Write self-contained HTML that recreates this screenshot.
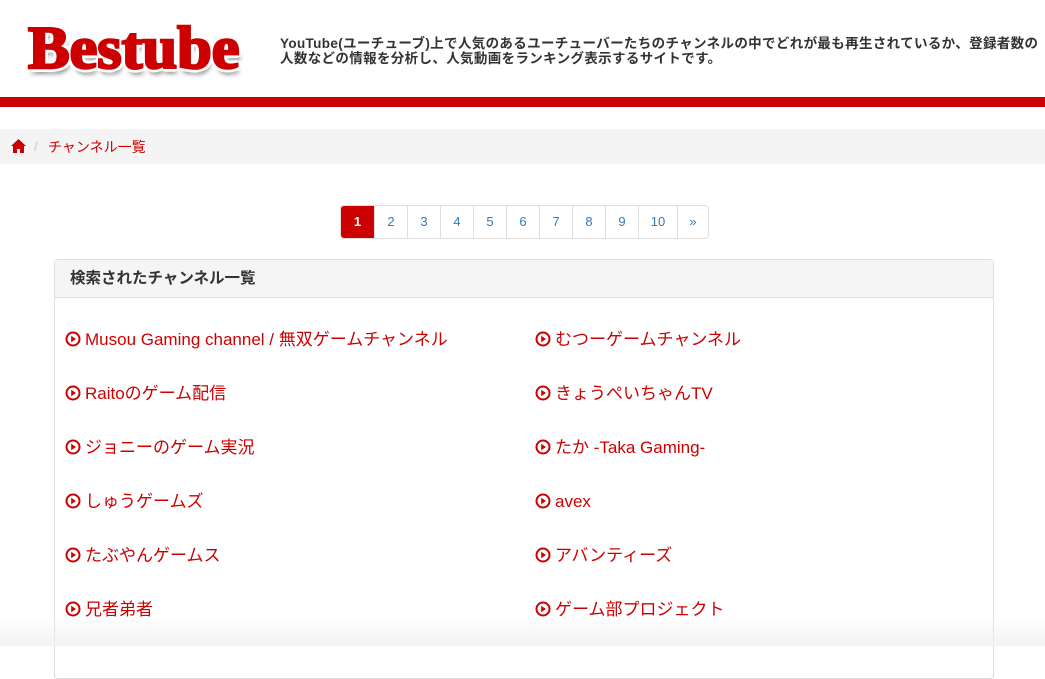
<!DOCTYPE html>
<html><head><meta charset="utf-8"><style>
*{box-sizing:border-box;margin:0;padding:0}
body{width:1045px;height:646px;overflow:hidden;background:#fff;font-family:"Liberation Sans","Noto Sans CJK JP",sans-serif;position:relative}
.logo{position:absolute;left:28px;top:14px;font-family:"Liberation Serif",serif;font-weight:bold;font-size:60px;color:#cc0000;-webkit-text-stroke:2.5px #cc0000;letter-spacing:0px;text-shadow:-4px 0 0 #fff,4px 0 0 #fff,0 -4px 0 #fff,0 4px 0 #fff,-3px -3px 0 #fff,3px 3px 0 #fff,-3px 3px 0 #fff,3px -3px 0 #fff,2px 6px 4px rgba(0,0,0,.45);transform:scaleX(1.04);transform-origin:left}
.desc{position:absolute;left:280px;top:36px;width:780px;font-size:13.5px;font-weight:bold;color:#333;line-height:15px;letter-spacing:0.35px;white-space:nowrap}
.bar{position:absolute;left:0;top:97px;width:1045px;height:10px;background:#cc0000}
.bc{position:absolute;left:0;top:129px;width:1045px;height:35px;background:#f4f4f4;font-size:14px;color:#cc0000}
.bc .sep{position:absolute;left:34px;top:9px;color:#ccc}
.bc .t{position:absolute;left:48px;top:8px}
.pg{position:absolute;left:340px;top:205px;display:flex;height:34px;border:1px solid #ddd;border-radius:4px;overflow:hidden}
.pg span{display:block;height:32px;line-height:32px;text-align:center;font-size:13px;color:#337ab7;border-left:1px solid #ddd;width:33px}
.pg span:first-child{border-left:none;background:#cc0000;color:#fff;font-weight:bold;width:33px}
.panel{position:absolute;left:54px;top:259px;width:940px;height:420px;border:1px solid #ddd;border-radius:4px}
.ph{height:38px;background:#f5f5f5;border-bottom:1px solid #ddd;font-size:15.5px;font-weight:bold;color:#333;line-height:38px;padding-left:15px}
.it{position:absolute;font-size:17px;color:#cc0000;white-space:nowrap;height:22px;line-height:22px}
.it svg{position:absolute;left:0;top:2px}
.it b{font-weight:normal;position:absolute;left:20px;top:0}
.fade{position:absolute;left:0;top:615px;width:1045px;height:31px;background:linear-gradient(rgba(245,245,245,0),rgba(240,240,240,.8))}
</style></head><body>
<div class="logo">Bestube</div>
<div class="desc">YouTube(ユーチューブ)上で人気のあるユーチューバーたちのチャンネルの中でどれが最も再生されているか、登録者数の<br>人数などの情報を分析し、人気動画をランキング表示するサイトです。</div>
<div class="bar"></div>
<div class="bc">
<svg style="position:absolute;left:11px;top:10px" width="15" height="14" viewBox="0 0 15 14"><path d="M7.5 0L0 7h2v7h4v-4h3v4h4V7h2z" fill="#cc0000"/></svg>
<span class="sep">/</span><span class="t">チャンネル一覧</span></div>
<div class="pg"><span>1</span><span>2</span><span>3</span><span>4</span><span>5</span><span>6</span><span>7</span><span>8</span><span>9</span><span style="width:39px">10</span><span style="width:31px">»</span></div>
<div class="panel"><div class="ph">検索されたチャンネル一覧</div></div>
<div id="items"></div>
<script>
var L=["Musou Gaming channel / 無双ゲームチャンネル","Raitoのゲーム配信","ジョニーのゲーム実況","しゅうゲームズ","たぶやんゲームス","兄者弟者"];
var R=["むつーゲームチャンネル","きょうぺいちゃんTV","たか -Taka Gaming-","avex","アバンティーズ","ゲーム部プロジェクト"];
var ic='<svg width="16" height="16" viewBox="0 0 16 16"><circle cx="8" cy="8" r="6.5" fill="none" stroke="#cc0000" stroke-width="2"/><path d="M6.2 4.8L11 8 6.2 11.2z" fill="#cc0000"/></svg>';
var h='';for(var i=0;i<6;i++){var y=329+i*54;h+='<div class="it" style="left:65px;top:'+y+'px">'+ic+'<b>'+L[i]+'</b></div><div class="it" style="left:535px;top:'+y+'px">'+ic+'<b>'+R[i]+'</b></div>';}
document.getElementById('items').innerHTML=h;
</script>
<div class="fade"></div>
</body></html>
